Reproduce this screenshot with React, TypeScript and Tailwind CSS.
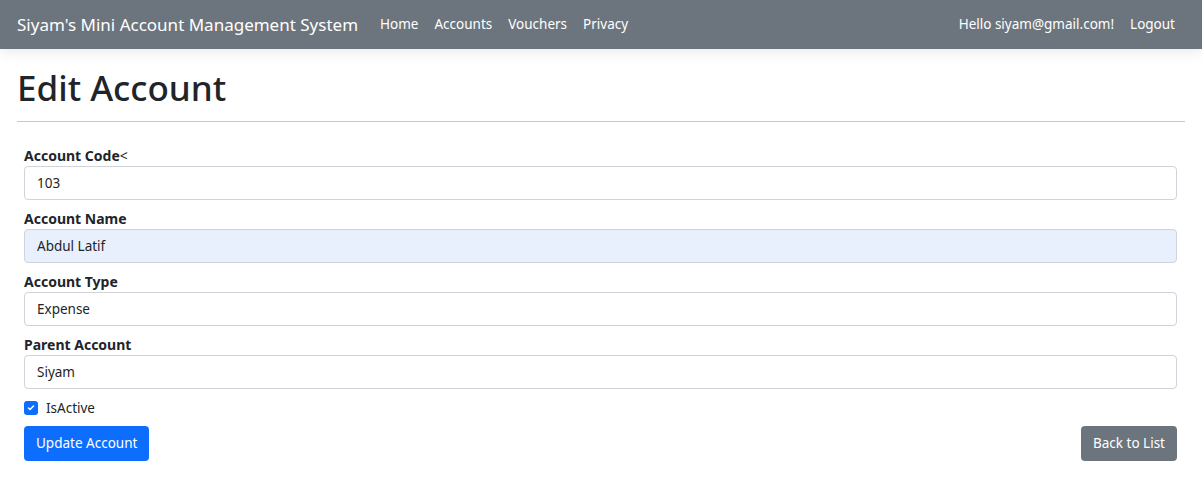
const fields = [
  { label: "Account Code", suffix: "<", value: "103", filled: false },
  { label: "Account Name", suffix: "", value: "Abdul Latif", filled: true },
  { label: "Account Type", suffix: "", value: "Expense", filled: false },
  { label: "Parent Account", suffix: "", value: "Siyam", filled: false },
]

const App = () => {
  return (
    <div className="min-h-screen bg-white text-[#212529] font-['Noto_Sans',sans-serif]">
      <nav className="h-[49px] bg-[#6c757d] flex items-center justify-between pl-[17px] pr-[19px] shadow-[0_4px_12px_rgba(0,0,0,0.08)]">
        <div className="flex items-center">
          <span className="text-[17px] text-white mr-[14px]">Siyam's Mini Account Management System</span>
          <a className="text-[13.5px] text-white px-2">Home</a>
          <a className="text-[13.5px] text-white px-2">Accounts</a>
          <a className="text-[13.5px] text-white px-2">Vouchers</a>
          <a className="text-[13.5px] text-white px-2">Privacy</a>
        </div>
        <div className="flex items-center">
          <span className="text-[13.5px] text-white px-2">Hello siyam@gmail.com!</span>
          <a className="text-[13.5px] text-white px-2">Logout</a>
        </div>
      </nav>

      <main className="px-[17px]">
        <h1 className="text-[35px] font-medium leading-[1.2] pt-[18px] pb-[12px]">Edit Account</h1>
        <hr className="border-0 border-t border-[#c8c9ca]" />

        <form className="pl-[7px] pr-[8px] pt-[23px]">
          {fields.map((f) => (
            <div key={f.label} className="mb-[8px]">
              <label className="block text-[14px] font-bold leading-[21px]">
                {f.label}
                {f.suffix && <span className="font-normal">{f.suffix}</span>}
              </label>
              <input
                readOnly
                value={f.value}
                className={`w-full h-[34px] px-3 text-[13.5px] border border-[#ced4da] rounded-[4px] outline-none ${
                  f.filled ? "bg-[#e8f0fe]" : "bg-white"
                }`}
              />
            </div>
          ))}

          <div className="flex items-center gap-2 h-[18px] mt-[10px]">
            <span className="w-[14px] h-[14px] rounded-[3px] bg-[#0d6efd] flex items-center justify-center">
              <svg viewBox="0 0 20 20" className="w-[10px] h-[10px]">
                <path d="M5 10l3 3 7-7" fill="none" stroke="white" strokeWidth="3" strokeLinecap="round" strokeLinejoin="round" />
              </svg>
            </span>
            <span className="text-[13.5px]">IsActive</span>
          </div>

          <div className="flex justify-between mt-[9px]">
            <button type="button" className="h-[35px] px-3 text-[13.5px] text-white bg-[#0d6efd] rounded-[4px]">
              Update Account
            </button>
            <button type="button" className="h-[35px] px-3 text-[13.5px] text-white bg-[#6c757d] rounded-[4px]">
              Back to List
            </button>
          </div>
        </form>
      </main>
    </div>
  )
}

export default App
